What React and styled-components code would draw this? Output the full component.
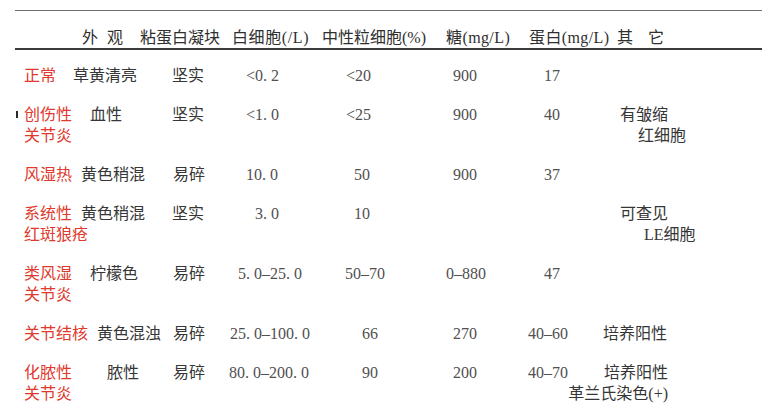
import React from "react";
import styled, { createGlobalStyle } from "styled-components";

const Global = createGlobalStyle`
  html, body {
    margin: 0;
    background: #ffffff;
  }
  body {
    font-family: "Liberation Serif", "Noto Sans CJK SC", serif;
    font-size: 16px;
    color: #363636;
  }
`;

const COLS = "58px 67px 88px 92px 120px 82px 78px 162px";

const Sheet = styled.div`
  width: 747px;
  margin: 10px 0 0 15px;
`;

const TopRule = styled.div`
  border-top: 1px solid #6b6b6b;
`;

const HeadRule = styled.div`
  border-top: 2px solid #3a3a3a;
`;

const HeadRow = styled.div`
  display: grid;
  grid-template-columns: ${COLS};
  padding-top: 16px;
  line-height: 21px;
  color: #2f2f2f;
`;

const Body = styled.div`
  padding-top: 15px;
`;

const Row = styled.div`
  display: grid;
  grid-template-columns: ${COLS};
  line-height: 21px;
  margin-bottom: 18px;
`;

const Cell = styled.div`
  position: relative;
  display: flex;
  flex-direction: column;
  align-items: ${(p) => (p.$end ? "flex-end" : "flex-start")};
  padding-left: ${(p) => p.$pad || 0}px;
  white-space: nowrap;
  min-width: 0;
  letter-spacing: ${(p) => p.$spread || 0}px;
  color: ${(p) =>
    p.$tone === "red" ? "#e0392d" : p.$tone === "num" ? "#505050" : "inherit"};

  ${(p) =>
    p.$mark &&
    `
    &::before {
      content: "";
      position: absolute;
      left: 1px;
      top: 7px;
      width: 2px;
      height: 7px;
      background: #2a2a2a;
    }
  `}
`;

const Line = styled.span`
  padding-left: ${(p) => p.$indent || 0}px;
`;

const header = [
  { t: "", pad: 0 },
  { t: "外观", pad: 9, spread: 9 },
  { t: "粘蛋白凝块", pad: 0 },
  { t: "白细胞(/L)", pad: 4, spread: 0.6 },
  { t: "中性粒细胞(%)", pad: 2 },
  { t: "糖(mg/L)", pad: 6, spread: 0.4 },
  { t: "蛋白(mg/L)", pad: 7, spread: 0.4 },
  { t: "其它", pad: 17, spread: 15 },
];

// each cell: [padding, text]; "other" column uses lines with own indents
const rows = [
  {
    name: ["正常"],
    cells: [[0, "草黄清亮"], [32, "坚实"], [18, "<0. 2"], [26, "<20"], [13, "900"], [22, "17"]],
    other: [],
  },
  {
    name: ["创伤性", "关节炎"],
    mark: true,
    cells: [[17, "血性"], [32, "坚实"], [18, "<1. 0"], [26, "<25"], [13, "900"], [22, "40"]],
    other: [["有皱缩", 20], ["红细胞", 38]],
  },
  {
    name: ["风湿热"],
    cells: [[8, "黄色稍混"], [33, "易碎"], [18, "10. 0"], [34, "50"], [13, "900"], [22, "37"]],
    other: [],
  },
  {
    name: ["系统性", "红斑狼疮"],
    cells: [[8, "黄色稍混"], [32, "坚实"], [27, "3. 0"], [34, "10"], [13, ""], [22, ""]],
    other: [["可查见", 20], ["LE细胞", 44]],
  },
  {
    name: ["类风湿", "关节炎"],
    cells: [[17, "柠檬色"], [33, "易碎"], [10, "5. 0–25. 0"], [25, "50–70"], [6, "0–880"], [22, "47"]],
    other: [],
  },
  {
    name: ["关节结核"],
    cells: [[24, "黄色混浊"], [33, "易碎"], [2, "25. 0–100. 0"], [42, "66"], [13, "270"], [6, "40–60"]],
    other: [["培养阳性", 3]],
  },
  {
    name: ["化脓性", "关节炎"],
    cells: [[34, "脓性"], [33, "易碎"], [1, "80. 0–200. 0"], [42, "90"], [13, "200"], [6, "40–70"]],
    other: [["培养阳性"], ["革兰氏染色(+)"]],
    otherEnd: true,
  },
];

const isNum = (t) => /^[<0-9]/.test(t);

const App = () => {
  return (
    <>
      <Global />
      <Sheet>
        <TopRule />
        <HeadRow>
          {header.map((h, i) => (
            <Cell key={i} $pad={h.pad} $spread={h.spread}>
              {h.t}
            </Cell>
          ))}
        </HeadRow>
        <HeadRule />
        <Body>
          {rows.map((r, i) => (
            <Row key={i}>
              <Cell $pad={9} $tone="red" $mark={r.mark}>
                {r.name.map((n) => (
                  <Line key={n}>{n}</Line>
                ))}
              </Cell>
              {r.cells.map(([pad, t], j) => (
                <Cell key={j} $pad={pad} $tone={isNum(t) ? "num" : undefined}>
                  {t}
                </Cell>
              ))}
              {r.otherEnd ? (
                <Cell $end style={{ width: 68 }}>
                  {r.other.map(([t]) => (
                    <Line key={t}>{t}</Line>
                  ))}
                </Cell>
              ) : (
                <Cell>
                  {r.other.map(([t, ind]) => (
                    <Line key={t} $indent={ind}>
                      {t}
                    </Line>
                  ))}
                </Cell>
              )}
            </Row>
          ))}
        </Body>
      </Sheet>
    </>
  );
};

export default App;
